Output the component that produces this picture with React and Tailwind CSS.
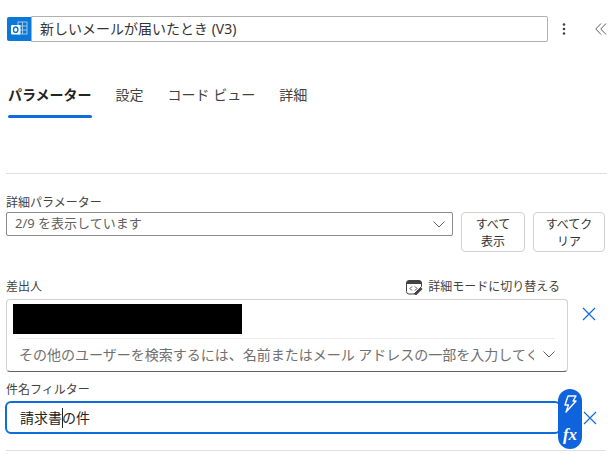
const FONT = { fontFamily: '"Noto Sans", "Noto Sans CJK JP", sans-serif' }

function OutlookIcon() {
  return (
    <svg width="24" height="24" viewBox="0 0 24 24" className="shrink-0 rounded-l-[2px]">
      <rect width="24" height="24" fill="#0a78d4" />
      <rect x="11" y="5" width="9" height="12" fill="none" stroke="#9cc9ee" strokeWidth="1" />
      <path d="M11 9h9M11 13h9M15.500 5v12" stroke="#9cc9ee" strokeWidth="1" />
      <rect x="4" y="8" width="9.500" height="9.500" rx="1" fill="#fff" />
      <ellipse cx="8.700" cy="12.700" rx="2.200" ry="2.700" fill="none" stroke="#0a78d4" strokeWidth="1.400" />
    </svg>
  )
}

function Cross({ className }) {
  return (
    <svg width="14" height="14" viewBox="0 0 14 14" className={className}>
      <path d="M1 1l12 12M13 1L1 13" stroke="#0f6cdc" strokeWidth="1.200" fill="none" />
    </svg>
  )
}

function Chevron({ color = '#616161', w = 12 }) {
  return (
    <svg width={w} height="7" viewBox="0 0 12 7" className="shrink-0">
      <path d="M.5.5L6 6l5.500-5.500" stroke={color} strokeWidth="1" fill="none" />
    </svg>
  )
}

function CodeEditIcon() {
  return (
    <svg width="17" height="15" viewBox="0 0 17 15" className="shrink-0">
      <path d="M3 .5h10A2.500 2.500 0 0 1 15.500 3v3.500L8 14H3A2.500 2.500 0 0 1 .5 11.500V3A2.500 2.500 0 0 1 3 .5z" fill="#fff" stroke="#424242" />
      <path d="M3 .5h10A2.500 2.500 0 0 1 15.500 3v1H.5V3A2.500 2.500 0 0 1 3 .5z" fill="#424242" />
      <path d="M6 6.500L4 8.500l2 2M9 6.500l2 2-2 2" stroke="#424242" fill="none" />
      <path d="M15 7.500l1.500 1.500-6 6H8.500v-1.800z" fill="#424242" />
    </svg>
  )
}

export default function App() {
  return (
    <div className="w-[613px] h-[454px] overflow-hidden bg-white text-[#242424] flex flex-col relative" style={FONT}>
      {/* Header */}
      <div className="flex items-center pt-4 pl-[7px] h-[42px]">
        <OutlookIcon />
        <div className="w-[517px] h-[26px] border border-[#b0b0b0] rounded-r-[2px] pl-2 text-[14px] leading-[24px] text-[#333]">
          新しいメールが届いたとき (V3)
        </div>
        <svg width="4" height="14" viewBox="0 0 4 14" className="ml-[14px] shrink-0">
          <circle cx="2" cy="2.500" r="1.300" fill="#424242" />
          <circle cx="2" cy="7" r="1.300" fill="#424242" />
          <circle cx="2" cy="11.500" r="1.300" fill="#424242" />
        </svg>
        <svg width="12" height="12" viewBox="0 0 12 12" className="ml-[29px] shrink-0">
          <path d="M6 .5L.8 6 6 11.500M11 .5L5.800 6 11 11.500" stroke="#616161" fill="none" />
        </svg>
      </div>

      {/* Tabs */}
      <div className="flex pl-2 mt-[43px] gap-6 text-[14px] leading-5 text-[#424242]">
        <div className="relative pb-[13px] font-bold text-[#242424]">
          パラメーター
          <div className="absolute left-0 right-0 bottom-0 h-[3px] rounded-full bg-[#0f6cdc]" />
        </div>
        <div>設定</div>
        <div>コード ビュー</div>
        <div>詳細</div>
      </div>

      <div className="mt-[55px] mx-[6px] border-t border-[#e0e0e0]" />

      {/* Advanced parameters */}
      <div className="mt-[21px] ml-[6px] text-[12px] leading-4 text-[#424242]">詳細パラメーター</div>
      <div className="flex items-start ml-[6px] mt-[1px]">
        <div className="w-[447px] h-[24px] border border-[#8a8a8a] rounded-[2px] pl-[8px] pr-[7px] flex items-center justify-between text-[13px] text-[#616161]">
          <span>2/9 を表示しています</span>
          <Chevron />
        </div>
        <button className="ml-[8px] w-[64px] h-[40px] border border-[#d1d1d1] rounded-[4px] pt-px text-[12px] leading-[17px] text-[#333]">すべて<br />表示</button>
        <button className="ml-[8px] w-[72px] h-[40px] border border-[#d1d1d1] rounded-[4px] pt-px text-[12px] leading-[17px] text-[#333]">すべてク<br />リア</button>
      </div>

      {/* From */}
      <div className="flex items-center justify-between ml-[6px] w-[554px] mt-[25px] text-[12px] leading-5 text-[#424242]">
        <span>差出人</span>
        <span className="flex items-center gap-[5px]"><CodeEditIcon />詳細モードに切り替える</span>
      </div>
      <div className="flex items-start ml-[6px] mt-[2px]">
        <div className="w-[562px] h-[73px] border border-[#d1d1d1] border-b-[#616161] rounded-[4px] pl-[6px] pr-[12px] pt-[4px]">
          <div className="w-[229px] h-[30px] bg-black" />
          <div className="mt-[4px] ml-[6px] border-t border-[#eaeaea] flex items-center h-[32px] justify-between">
            <span className="text-[14px] text-[#707070] whitespace-nowrap overflow-hidden w-[515px]">その他のユーザーを検索するには、名前またはメール アドレスの一部を入力してく</span>
            <Chevron w={12} />
          </div>
        </div>
        <Cross className="ml-[14px] mt-[8px] shrink-0" />
      </div>

      {/* Subject filter */}
      <div className="ml-[6px] mt-[8px] text-[12px] leading-5 text-[#424242]">件名フィルター</div>
      <div className="flex items-center ml-[5px] mt-[1px]">
        <div className="w-[556px] h-[33px] border-2 border-[#0f6cdc] rounded-[6px] pl-[13px] text-[14px] leading-[28px] text-[#242424] flex items-center">
          請求書<span className="w-px h-[20px] bg-[#242424] -mx-[0.500px]" />の件
        </div>
        <Cross className="ml-[22px] shrink-0" />
      </div>
      <div className="mt-[16px] ml-[6px] w-[600px] border-t border-[#e0e0e0]" />

      {/* Token picker */}
      <div className="absolute left-[558px] top-[389px] w-[24px] h-[60px] rounded-full bg-[#0f63dc] flex flex-col items-center justify-between pt-[6px] pb-[5px] text-white">
        <svg width="14" height="18" viewBox="0 0 14 18">
          <path d="M5 1h8l-3 5h3L3 17l2.500-7H2z" fill="none" stroke="#fff" strokeWidth="1.400" strokeLinejoin="round" />
        </svg>
        <span className="italic font-bold text-[17px] leading-[18px]" style={{ fontFamily: '"Liberation Serif", serif' }}>fx</span>
      </div>
    </div>
  )
}
